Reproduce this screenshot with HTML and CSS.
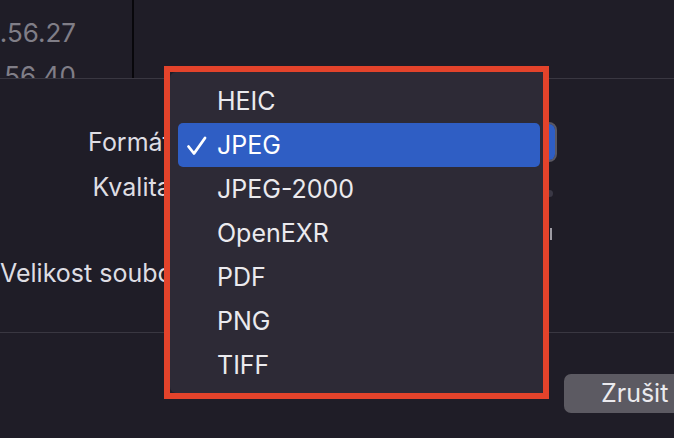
FILE: index.html
```html
<!DOCTYPE html>
<html lang="cs">
<head>
<meta charset="utf-8">
<title>Export</title>
<link rel="stylesheet" href="styles.css">
</head>
<body>
<div class="window">
  <div class="sidebar">
    <div class="time"><span>14.56.27</span></div>
    <div class="time"><span>14.56.40</span></div>
  </div>
  <div class="content"></div>
</div>
<div class="sheet">
  <div class="form">
    <div class="label">Formát:</div>
    <div class="control"><div class="popup"><span class="popup-arrows"></span></div></div>
    <div class="label">Kvalita:</div>
    <div class="control"><div class="slider"><span class="knob"></span></div></div>
    <div class="label spacer"></div>
    <div class="control"><div class="tick"></div></div>
    <div class="label">Velikost souboru:</div>
    <div class="control"></div>
  </div>
  <div class="buttons">
    <div class="btn">Zrušit</div>
  </div>
</div>

<div class="menu">
  <div class="item">HEIC</div>
  <div class="item selected">
    <svg class="check" width="22" height="22" viewBox="0 0 22 22"><polyline points="2.5,11.5 8,18.5 19,3" fill="none" stroke="#ffffff" stroke-width="2.8" stroke-linecap="round" stroke-linejoin="round"/></svg>
    JPEG
  </div>
  <div class="item">JPEG-2000</div>
  <div class="item">OpenEXR</div>
  <div class="item">PDF</div>
  <div class="item">PNG</div>
  <div class="item">TIFF</div>
</div>
<div class="highlight-box"></div>
</body>
</html>
```

FILE: styles.css
```css
html, body {
  margin: 0;
  padding: 0;
}
body {
  width: 674px;
  height: 438px;
  overflow: hidden;
  background: #1f1d27;
  font-family: Inter, "Noto Sans", sans-serif;
  color: #e6e5ea;
  position: relative;
}
.window {
  display: flex;
  height: 78px;
}
.sidebar {
  width: 134px;
  border-right: 2px solid #08070b;
  overflow: hidden;
  display: flex;
  flex-direction: column;
  padding-top: 16px;
  box-sizing: border-box;
}
.time {
  width: 76px;
  display: flex;
  justify-content: flex-end;
  white-space: nowrap;
  font-size: 26px;
  line-height: 34px;
  color: #807e87;
  margin-bottom: 9px;
}
.content {
  flex: 1;
}
.sheet {
  border-top: 1px solid #393741;
  height: 359px;
  display: flex;
  flex-direction: column;
}
.form {
  height: 254px;
  display: grid;
  grid-template-columns: 190px 1fr;
  grid-template-rows: 42px 47px 40px 46px;
  padding-top: 42px;
  box-sizing: border-box;
  align-items: center;
  border-bottom: 1px solid #393741;
  font-size: 25px;
}
.label {
  text-align: right;
  white-space: nowrap;
  color: #dedde3;
  padding-right: 12px;
}
.control {
  height: 100%;
  display: flex;
  align-items: center;
  padding-left: 6px;
}
.popup {
  width: 357px;
  height: 36px;
  border: 2px solid #5a5863;
  border-radius: 8px;
  background: #34323d;
  display: flex;
  justify-content: flex-end;
  box-sizing: content-box;
}
.popup-arrows {
  width: 26px;
  background: #2f5ec4;
  border-radius: 0 6px 6px 0;
}
.slider {
  width: 358px;
  height: 8px;
  margin-top: 14px;
  display: flex;
  justify-content: flex-end;
  align-items: center;
}
.knob {
  width: 7px;
  height: 7px;
  border-radius: 50%;
  background: #3a3845;
  margin-right: 1px;
}
.tick {
  margin-left: 354px;
  margin-top: 8px;
  width: 2px;
  height: 12px;
  background: #9d9ba3;
}
.buttons {
  flex: 1;
  display: flex;
  justify-content: flex-end;
  padding-top: 41px;
  box-sizing: border-box;
}
.btn {
  width: 118px;
  height: 39px;
  margin-right: -8px;
  background: #5c5a62;
  border-radius: 7px;
  font-size: 25px;
  line-height: 39px;
  padding-left: 37px;
  box-sizing: border-box;
  color: #ebeaee;
}
.menu {
  position: absolute;
  left: 170px;
  top: 72px;
  width: 378px;
  height: 321px;
  background: #2d2a36;
  border-radius: 6px;
  padding: 7px 0 0;
  box-sizing: border-box;
}
.item {
  height: 44px;
  line-height: 44px;
  padding-left: 47px;
  font-size: 25px;
  color: #ebeaee;
  position: relative;
  margin: 0 8px 0 0;
}
.item.selected {
  background: #2f5ec4;
  border-radius: 5px;
  margin: 0 8px 0 8px;
  padding-left: 39px;
  color: #ffffff;
}
.check {
  position: absolute;
  left: 8px;
  top: 12px;
}
.highlight-box {
  position: absolute;
  left: 164px;
  top: 66px;
  width: 385px;
  height: 333px;
  border: 6px solid #e3432b;
  box-sizing: border-box;
}
```
